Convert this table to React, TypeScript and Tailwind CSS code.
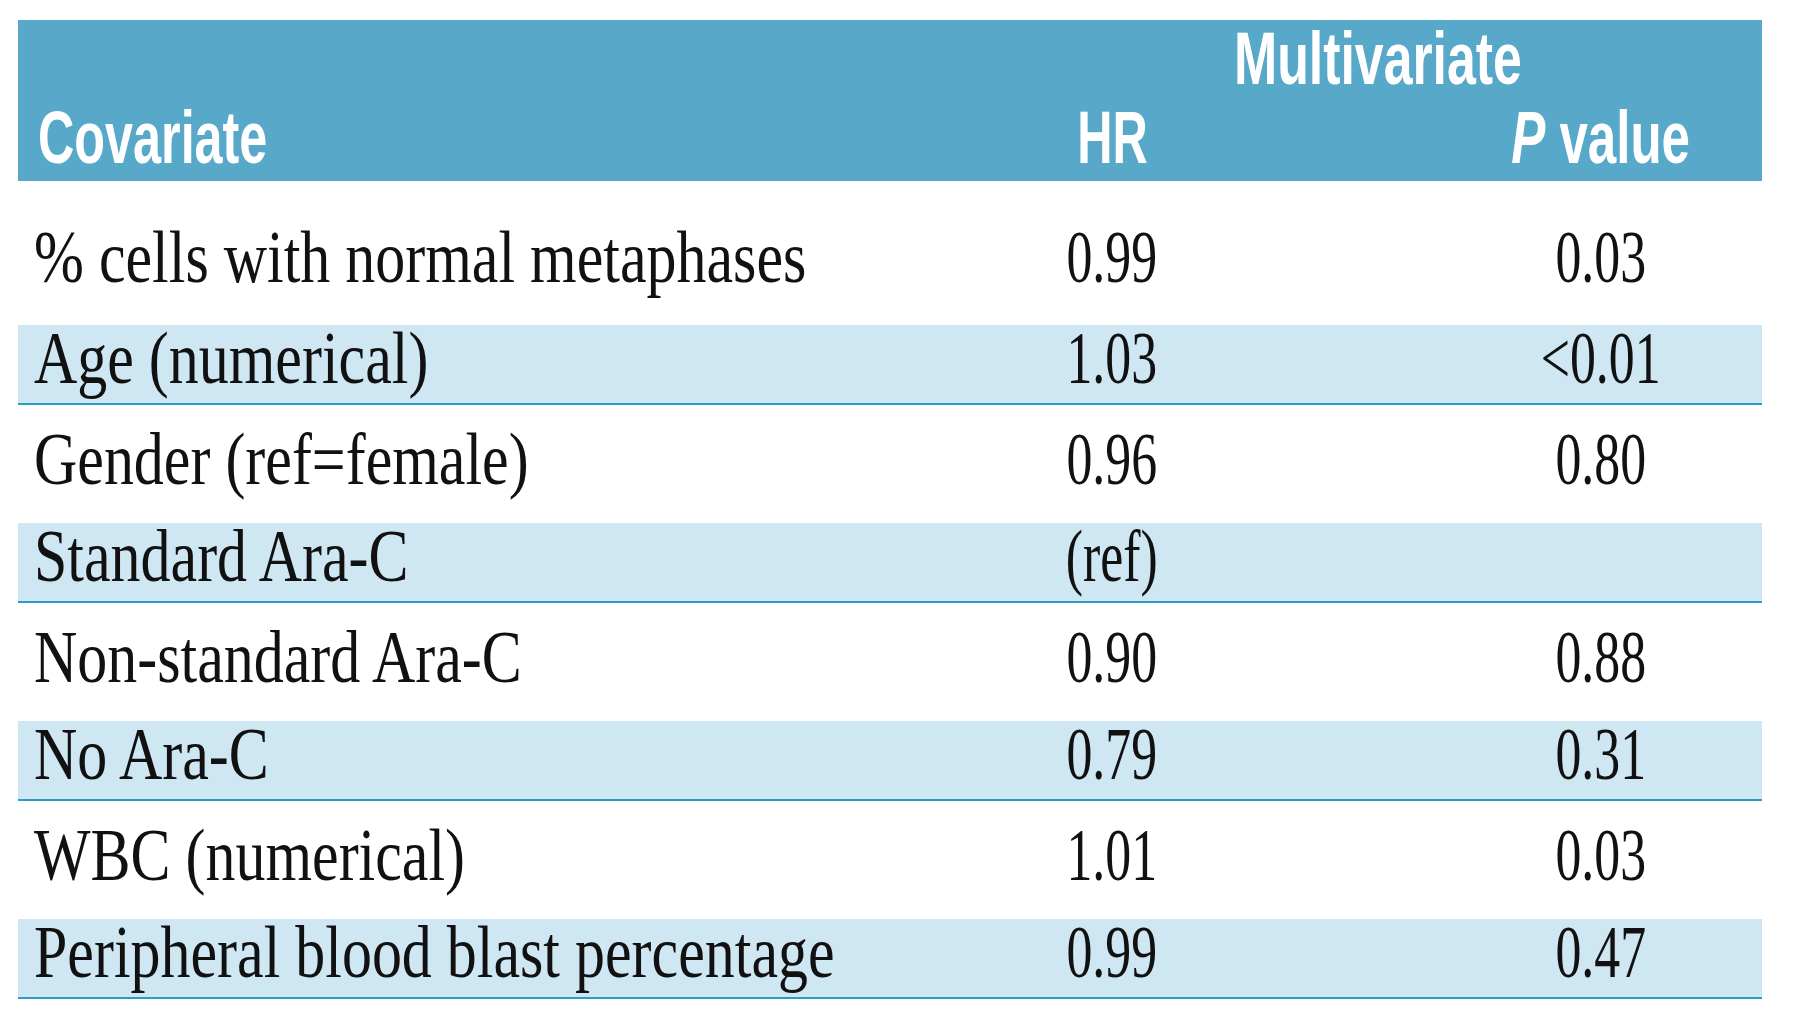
const rows = [
  { label: "% cells with normal metaphases", hr: "0.99", p: "0.03" },
  { label: "Age (numerical)", hr: "1.03", p: "<0.01" },
  { label: "Gender (ref=female)", hr: "0.96", p: "0.80" },
  { label: "Standard Ara-C", hr: "(ref)", p: "" },
  { label: "Non-standard Ara-C", hr: "0.90", p: "0.88" },
  { label: "No Ara-C", hr: "0.79", p: "0.31" },
  { label: "WBC (numerical)", hr: "1.01", p: "0.03" },
  { label: "Peripheral blood blast percentage", hr: "0.99", p: "0.47" },
];

const serif = "font-['Liberation_Serif',serif] text-[74px] leading-[66px] text-[#111]";
const head = "font-['Liberation_Sans',Arial,sans-serif] text-[74px] font-bold leading-[74px] text-white";

function Row({ label, hr, p, index }: { label: string; hr: string; p: string; index: number }) {
  const shaded = index % 2 === 1;
  const pad = index === 0 ? "pt-[43px] h-[144px]" : shaded ? "h-[80px] border-b-2 border-[#2a9cc6] bg-[#cfe6f3]" : "pt-[21px] h-[118px]";
  return (
    <div className={`grid grid-cols-[766px_656px_322px] ${pad}`}>
      <div className={`${serif} whitespace-nowrap pl-4`}>
        <span className="inline-block origin-left scale-x-[0.81]">{label}</span>
      </div>
      <div className={`${serif} flex justify-center whitespace-nowrap`}>
        <span className="inline-block scale-x-[0.7]">{hr}</span>
      </div>
      <div className={`${serif} flex justify-center whitespace-nowrap`}>
        <span className="inline-block scale-x-[0.7]">{p}</span>
      </div>
    </div>
  );
}

export default function App() {
  return (
    <div className="min-h-[1034px] w-[1800px] bg-white pt-5 pl-[18px]">
      <div className="w-[1744px]">
        <div className="bg-[#58a9c9] pt-[2px] pb-[6px]">
          <div className="flex h-[74px] justify-start pl-[1216px]">
            <span className={`${head} inline-block origin-left scale-x-[0.7] whitespace-nowrap`}>Multivariate</span>
          </div>
          <div className="mt-[5px] grid h-[74px] grid-cols-[766px_656px_322px]">
            <div className={`${head} pl-5 whitespace-nowrap`}>
              <span className="inline-block origin-left scale-x-[0.68]">Covariate</span>
            </div>
            <div className={`${head} flex justify-center whitespace-nowrap`}>
              <span className="inline-block scale-x-[0.66]">HR</span>
            </div>
            <div className={`${head} flex justify-center whitespace-nowrap`}>
              <span className="inline-block scale-x-[0.69]">
                <i>P</i> value
              </span>
            </div>
          </div>
        </div>
        {rows.map((r, i) => (
          <Row key={i} index={i} {...r} />
        ))}
      </div>
    </div>
  );
}
